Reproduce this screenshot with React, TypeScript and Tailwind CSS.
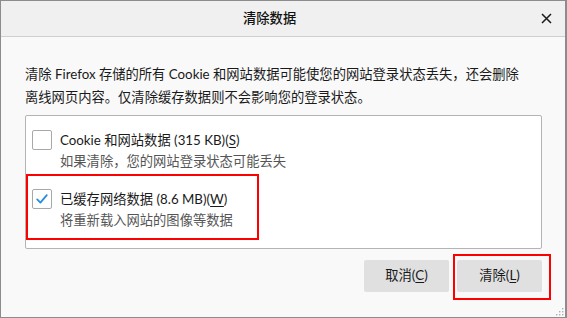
import React from "react";

function Check({ checked }: { checked?: boolean }) {
  return (
    <div className="w-[20px] h-[20px] shrink-0 rounded-[2px] border border-[#a8a8a8] bg-white flex items-center justify-center">
      {checked && (
        <svg width="14" height="14" viewBox="0 0 14 14" fill="none">
          <path d="M2.2 7.4 L5.4 10.6 L11.8 3.2" stroke="#2a8ddb" strokeWidth="1.8" strokeLinecap="round" strokeLinejoin="round" />
        </svg>
      )}
    </div>
  );
}

function Option({
  checked,
  label,
  keyLetter,
  hint,
  className = "",
}: {
  checked?: boolean;
  label: string;
  keyLetter: string;
  hint: string;
  className?: string;
}) {
  return (
    <div className={"flex gap-[8px] " + className}>
      <Check checked={checked} />
      <div className="flex flex-col">
        <div className="leading-[20px] text-[#1a1a1a] whitespace-nowrap">
          {label}(<span className="underline underline-offset-2">{keyLetter}</span>)
        </div>
        <div className="leading-[22px] text-[#555555] whitespace-nowrap">{hint}</div>
      </div>
    </div>
  );
}

export default function App() {
  return (
    <div className="relative w-[567px] h-[318px] flex flex-col bg-[#f9f9f9] border-l border-t border-b border-r-2 border-[#8c8c8c] text-[13.3px] font-['Lato','Noto_Sans_CJK_SC',sans-serif] overflow-hidden">
      {/* title bar */}
      <div className="h-[36px] shrink-0 flex items-center bg-[#f0f0f0] border-b border-[#cfcfcf]">
        <span className="ml-[242px] text-[#111111] font-medium">清除数据</span>
        <button className="ml-auto mr-[12px] w-[14px] h-[14px] flex items-center justify-center">
          <svg width="11" height="11" viewBox="0 0 11 11" fill="none">
            <path d="M1 1 L10 10 M10 1 L1 10" stroke="#1a1a1a" strokeWidth="1.5" />
          </svg>
        </button>
      </div>

      {/* body */}
      <div className="flex-1 flex flex-col pl-[24px] pr-[23px] pt-[26px]">
        <p className="leading-[23px] text-[#1a1a1a] whitespace-nowrap">
          清除 Firefox 存储的所有 Cookie 和网站数据可能使您的网站登录状态丢失，还会删除
          <br />
          离线网页内容。仅清除缓存数据则不会影响您的登录状态。
        </p>

        <div className="mt-[6px] h-[134px] bg-white border border-[#b4b4b4] rounded-[2px] pt-[14px] pl-[6px]">
          <Option label="Cookie 和网站数据 (315 KB)" keyLetter="S" hint="如果清除，您的网站登录状态可能丢失" />
          <Option
            className="mt-[17px]"
            checked
            label="已缓存网络数据 (8.6 MB)"
            keyLetter="W"
            hint="将重新载入网站的图像等数据"
          />
        </div>

        <div className="mt-[11px] flex justify-end gap-[8px]">
          <button className="w-[85px] h-[32px] rounded-[2px] bg-[#e0e0e0] text-[#1a1a1a]">
            取消(<span className="underline underline-offset-2">C</span>)
          </button>
          <button className="w-[85px] h-[32px] rounded-[2px] bg-[#e0e0e0] text-[#1a1a1a]">
            清除(<span className="underline underline-offset-2">L</span>)
          </button>
        </div>
      </div>

      {/* annotation boxes */}
      <div className="absolute left-[25px] top-[173px] w-[233px] h-[66px] border-2 border-[#ff0000] pointer-events-none" />
      <div className="absolute left-[452px] top-[253px] w-[98px] h-[46px] border-2 border-[#ff0000] pointer-events-none" />

      {/* resize grip */}
      <svg className="absolute right-[1px] bottom-[1px]" width="9" height="9" viewBox="0 0 9 9">
        <rect x="7" y="1" width="1.4" height="1.4" fill="#b0b0b0" />
        <rect x="4" y="4" width="1.4" height="1.4" fill="#b0b0b0" />
        <rect x="7" y="4" width="1.4" height="1.4" fill="#b0b0b0" />
        <rect x="1" y="7" width="1.4" height="1.4" fill="#b0b0b0" />
        <rect x="4" y="7" width="1.4" height="1.4" fill="#b0b0b0" />
        <rect x="7" y="7" width="1.4" height="1.4" fill="#b0b0b0" />
      </svg>
    </div>
  );
}
